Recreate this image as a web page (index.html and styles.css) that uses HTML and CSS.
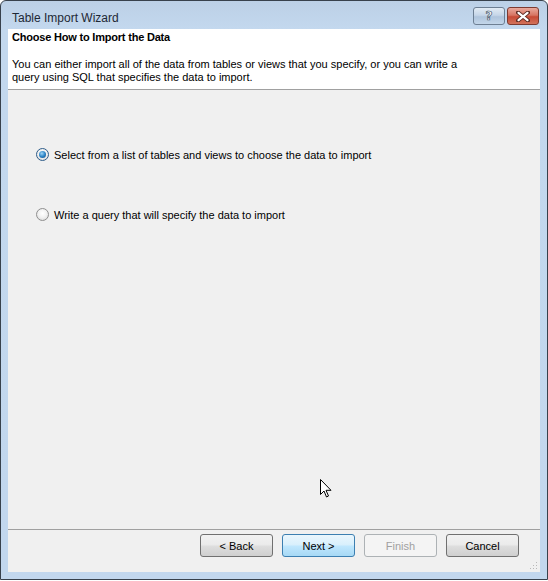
FILE: index.html
```html
<!DOCTYPE html>
<html>
<head>
<meta charset="utf-8">
<link rel="stylesheet" href="styles.css">
</head>
<body>
<div class="window">
  <div class="titlebar">
    <span class="title">Table Import Wizard</span>
    <div class="caption-btns">
      <div class="cap-btn help"><span class="qmark">?</span></div>
      <div class="cap-btn close">
        <svg width="14" height="11" viewBox="0 0 14 11">
          <path d="M2 1.5 L12 9.5 M12 1.5 L2 9.5" stroke="#5a2a22" stroke-width="4" stroke-linecap="round"/>
          <path d="M2.5 1.8 L11.5 9.2 M11.5 1.8 L2.5 9.2" stroke="#ffffff" stroke-width="2.2" stroke-linecap="round"/>
        </svg>
      </div>
    </div>
  </div>
  <div class="client">
    <div class="header">
      <div class="header-title">Choose How to Import the Data</div>
      <div class="header-desc">You can either import all of the data from tables or views that you specify, or you can write a<br>query using SQL that specifies the data to import.</div>
    </div>
    <div class="body">
      <label class="radio-row first">
        <span class="radio checked"><span class="dot"></span></span>
        <span class="radio-label">Select from a list of tables and views to choose the data to import</span>
      </label>
      <label class="radio-row second">
        <span class="radio"></span>
        <span class="radio-label">Write a query that will specify the data to import</span>
      </label>
    </div>
    <div class="footer">
      <div class="btn">&lt; Back</div>
      <div class="btn default">Next &gt;</div>
      <div class="btn disabled">Finish</div>
      <div class="btn">Cancel</div>
    </div>
    <div class="grip">
      <svg width="8" height="8" viewBox="0 0 8 8">
        <rect x="6" y="0" width="1" height="1" fill="#b8b8b8"/>
        <rect x="3" y="3" width="1" height="1" fill="#b8b8b8"/>
        <rect x="6" y="3" width="1" height="1" fill="#b8b8b8"/>
        <rect x="0" y="6" width="1" height="1" fill="#b8b8b8"/>
        <rect x="3" y="6" width="1" height="1" fill="#b8b8b8"/>
        <rect x="6" y="6" width="1" height="1" fill="#b8b8b8"/>
      </svg>
    </div>
    <div class="cursor">
      <svg width="12" height="19" viewBox="0 0 12 19">
        <path d="M0.5 0.5 L0.5 15.5 L4 12 L6.5 18 L8.5 17 L6 11.3 L11 11.3 Z" fill="#ffffff" stroke="#000000" stroke-width="1" stroke-linejoin="miter"/>
      </svg>
    </div>
  </div>
</div>
</body>
</html>
```
FILE: styles.css
```css
html, body {
  margin: 0;
  padding: 0;
  background: #ffffff;
}
.window {
  width: 548px;
  height: 580px;
  box-sizing: border-box;
  border: 1px solid #38414c;
  border-radius: 6px 6px 0 0;
  background: linear-gradient(to bottom, #bcd0e6 0px, #c3d8ee 28px, #c2d7ee 100%);
  padding: 0 7px 7px 7px;
  display: flex;
  flex-direction: column;
  font-family: "Liberation Sans", Arial, sans-serif;
  font-size: 11px;
  color: #000;
}
.titlebar {
  height: 28px;
  display: flex;
  align-items: flex-start;
  justify-content: space-between;
}
.title {
  margin-top: 10px;
  margin-left: 4px;
  font-family: "Liberation Sans", Arial, sans-serif;
  font-size: 12px;
  color: #1e2835;
}
.caption-btns {
  display: flex;
  gap: 2px;
  margin-top: 6px;
  margin-right: 1px;
}
.cap-btn {
  height: 18px;
  box-sizing: border-box;
  border: 1px solid #6d7f93;
  border-radius: 3px;
  display: flex;
  align-items: center;
  justify-content: center;
}
.help {
  width: 32px;
  background: linear-gradient(to bottom, #e2ebf4 0%, #c6d6e8 45%, #afc4dc 55%, #c3d6ea 100%);
}
.qmark {
  font-family: "DejaVu Sans", sans-serif;
  font-size: 12px;
  line-height: 14px;
  font-weight: bold;
  color: #ffffff;
  -webkit-text-stroke: 0.7px #4a5a6c;
}
.close {
  width: 32px;
  border-color: #7d3a30;
  background: linear-gradient(to bottom, #e9a99c 0%, #d77563 45%, #c74a35 55%, #d2735c 100%);
}
.client {
  flex: 1;
  position: relative;
  background: #f0f0f0;
  display: flex;
  flex-direction: column;
}
.header {
  height: 58px;
  background: #ffffff;
  border-bottom: 1px solid #a0a0a0;
  padding: 2px 0 0 4px;
  box-sizing: content-box;
}
.header-title {
  font-weight: bold;
  height: 13px;
  line-height: 13px;
  letter-spacing: -0.2px;
}
.header-desc {
  margin-top: 14px;
  line-height: 13px;
}
.body {
  flex: 1;
  padding: 0 0 0 28px;
  display: flex;
  flex-direction: column;
}
.radio-row {
  display: flex;
  align-items: center;
  gap: 5px;
  height: 13px;
}
.radio-row.first {
  margin-top: 58px;
}
.radio-row.second {
  margin-top: 47px;
}
.radio {
  width: 13px;
  height: 13px;
  box-sizing: border-box;
  border-radius: 50%;
  border: 1px solid #8f8f8f;
  background: radial-gradient(circle at 50% 40%, #ffffff 0%, #f2f2f2 45%, #d4d4d4 100%);
  display: flex;
  align-items: center;
  justify-content: center;
}
.radio.checked {
  border-color: #2f5d8a;
}
.dot {
  width: 7px;
  height: 7px;
  border-radius: 50%;
  background: radial-gradient(circle at 40% 35%, #9fd4f5 0%, #2d86c8 50%, #15467a 100%);
}
.footer {
  height: 43px;
  border-top: 1px solid #a0a0a0;
  display: flex;
  align-items: flex-start;
  gap: 9px;
  padding: 4px 0 0 192px;
  box-sizing: border-box;
}
.btn {
  width: 73px;
  height: 23px;
  box-sizing: border-box;
  border: 1px solid #707070;
  border-radius: 3px;
  background: linear-gradient(to bottom, #f2f2f2 0%, #ebebeb 45%, #dddddd 55%, #cfcfcf 100%);
  display: flex;
  align-items: center;
  justify-content: center;
  color: #000;
}
.btn.default {
  border-color: #3c7fb1;
  background: linear-gradient(to bottom, #eaf6fd 0%, #d9f0fc 45%, #bee6fd 55%, #a7d9f5 100%);
}
.btn.disabled {
  border-color: #adb2b5;
  background: #f4f4f4;
  color: #a0a0a0;
}
.grip {
  position: absolute;
  right: 2px;
  bottom: 2px;
  width: 8px;
  height: 8px;
  line-height: 0;
}
.cursor {
  position: absolute;
  left: 312px;
  top: 450px;
  line-height: 0;
}
```
